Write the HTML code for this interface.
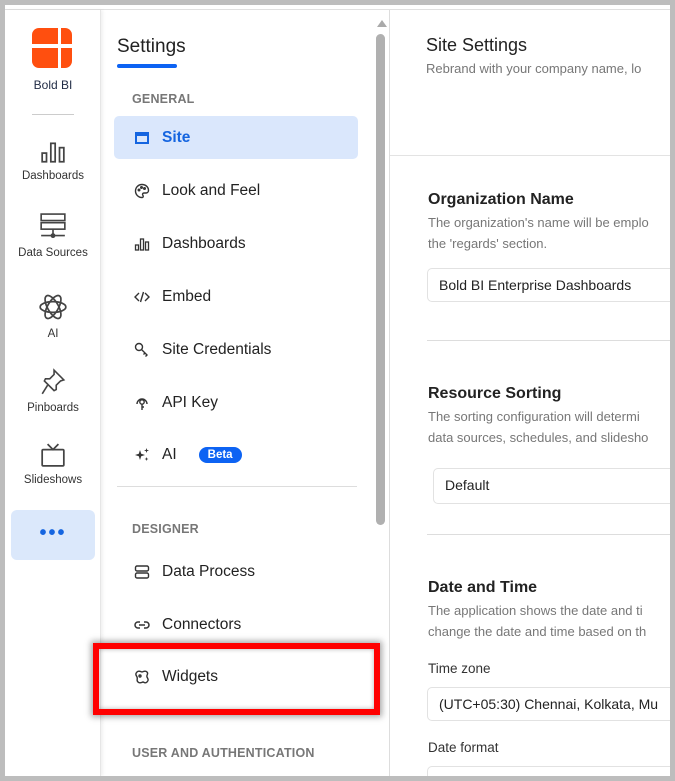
<!DOCTYPE html>
<html><head><meta charset="utf-8"><style>
*{box-sizing:border-box;margin:0;padding:0}
body{width:675px;height:781px;background:#bdbdbd;font-family:"Liberation Sans",Arial,sans-serif;position:relative;overflow:hidden}
#win{position:absolute;left:5px;top:5px;width:665px;height:771px;background:#fff;overflow:hidden}
#topline{position:absolute;left:0;top:4px;width:665px;height:1px;background:#e0e0e0}
#nav{position:absolute;left:0;top:5px;width:96px;height:766px;background:#fff;border-right:1px solid #e6e6e6;box-shadow:2px 0 3px rgba(0,0,0,.06)}
.ni{position:absolute;left:0;width:96px;text-align:center;font-size:11.5px;color:#333}
.ni svg{display:block;margin:0 auto 6px}
#set{position:absolute;left:97px;top:5px;width:286px;height:766px}
.it{position:absolute;left:12px;width:244px;height:43px;display:flex;align-items:center;padding-left:20px;font-size:15.5px;color:#222}
.it svg{width:16px;height:16px;margin-right:12px;flex:none}
.sec{position:absolute;left:30px;font-size:12.5px;font-weight:bold;color:#777;letter-spacing:.2px}
#main{position:absolute;left:384px;top:5px;width:281px;height:766px;border-left:1px solid #ddd}
.h{position:absolute;left:38px;font-size:16px;font-weight:bold;color:#222}
.d{position:absolute;left:38px;font-size:13px;color:#777;line-height:21px;white-space:nowrap}
.inp{position:absolute;left:37px;width:260px;height:34px;border:1px solid #e2e2e2;border-radius:5px;font-size:14px;color:#222;padding:8px 0 0 11px;white-space:nowrap}
.hr{position:absolute;left:37px;width:260px;height:1px;background:#ddd}
</style></head><body>
<div id="win">
<div id="topline"></div>
<div id="nav">
 <svg style="position:absolute;left:27px;top:18px" width="40" height="40" viewBox="0 0 40 40"><path d="M0 7a7 7 0 0 1 7-7h19v16H0z" fill="#ff4f0f"/><path d="M29 0h4a7 7 0 0 1 7 7v9H29z" fill="#ff4f0f"/><path d="M0 20h26v20H7a7 7 0 0 1-7-7z" fill="#ff4f0f"/><path d="M29 20h11v13a7 7 0 0 1-7 7h-4z" fill="#ff4f0f"/></svg>
 <div class="ni" style="top:68px;font-size:12px;color:#1f2a44">Bold BI</div>
 <div style="position:absolute;left:27px;top:104px;width:42px;height:1px;background:#ccc"></div>
 <div class="ni" style="top:130px"><svg width="26" height="24" viewBox="0 0 24 22" fill="none" stroke="#444" stroke-width="1.6"><rect x="2" y="12" width="4" height="8"/><rect x="10" y="3" width="4" height="17"/><rect x="18" y="7" width="4" height="13"/></svg>Dashboards</div>
 <div class="ni" style="top:203px"><svg width="28" height="28" viewBox="0 0 26 26" fill="none" stroke="#444" stroke-width="1.5"><rect x="2" y="1" width="22" height="6"/><rect x="2" y="9" width="22" height="6"/><path d="M13 15v5M2 21h22"/><circle cx="13" cy="21" r="1.5" fill="#444"/></svg>Data Sources</div>
 <div class="ni" style="top:282px"><svg width="30" height="30" viewBox="0 0 28 28" fill="none" stroke="#444" stroke-width="1.6"><ellipse cx="14" cy="14" rx="12" ry="5"/><ellipse cx="14" cy="14" rx="12" ry="5" transform="rotate(60 14 14)"/><ellipse cx="14" cy="14" rx="12" ry="5" transform="rotate(-60 14 14)"/></svg>AI</div>
 <div class="ni" style="top:358px"><svg width="26" height="28" viewBox="0 0 24 26" fill="none" stroke="#444" stroke-width="1.5"><path d="M13 2l9 9-3 1-4 4 0 4-2 1-9-9 1-2 4 0 4-4z"/><path d="M7 16l-5 8"/></svg>Pinboards</div>
 <div class="ni" style="top:432px"><svg width="26" height="26" viewBox="0 0 24 24" fill="none" stroke="#444" stroke-width="1.6"><rect x="2" y="7" width="20" height="15" rx="1"/><path d="M7 2l5 5 5-5"/></svg>Slideshows</div>
 <div style="position:absolute;left:6px;top:500px;width:84px;height:50px;background:#dbe8fb;border-radius:6px;text-align:center;line-height:46px;color:#1565e0;font-size:20px;letter-spacing:2px;font-weight:bold">•••</div>
</div>
<div id="set">
 <div style="position:absolute;left:15px;top:26px;font-size:19px;color:#222">Settings</div>
 <div style="position:absolute;left:15px;top:54px;width:60px;height:4px;border-radius:2px;background:#0d63f3"></div>
 <div class="sec" style="top:82px">GENERAL</div>
 <div class="it" style="top:106px;background:#dae7fc;border-radius:5px;color:#1565e0;font-weight:bold"><svg viewBox="0 0 16 16"><rect x="1" y="2" width="14" height="12" fill="#1565e0"/><rect x="3" y="6" width="10" height="6" fill="#dae7fc"/></svg>Site</div>
 <div class="it" style="top:159px"><svg viewBox="0 0 16 16" fill="none" stroke="#333" stroke-width="1.4"><path d="M8 1.5a6.5 6.5 0 1 0 0 13c1.5 0 1.5-1.5.8-2.3-.7-.9 0-2.2 1.2-2.2H12a2.5 2.5 0 0 0 2.5-2.5C14.5 4 11.6 1.5 8 1.5z"/><circle cx="5" cy="7" r=".8"/><circle cx="7.5" cy="4.5" r=".8"/><circle cx="10.5" cy="5.5" r=".8"/></svg>Look and Feel</div>
 <div class="it" style="top:212px"><svg viewBox="0 0 16 16" fill="none" stroke="#333" stroke-width="1.3"><rect x="1.5" y="9" width="3" height="5"/><rect x="6.5" y="3" width="3" height="11"/><rect x="11.5" y="6" width="3" height="8"/></svg>Dashboards</div>
 <div class="it" style="top:265px"><svg viewBox="0 0 16 16" fill="none" stroke="#333" stroke-width="1.4"><path d="M5 4L1 8l4 4M11 4l4 4-4 4M9.5 3l-3 10"/></svg>Embed</div>
 <div class="it" style="top:318px"><svg viewBox="0 0 16 16" fill="none" stroke="#333" stroke-width="1.4"><circle cx="5" cy="5" r="3.5"/><path d="M7.5 7.5l6 6M11 11l-1.5 1.5M13 13l-1.5 1.5"/></svg>Site Credentials</div>
 <div class="it" style="top:371px"><svg viewBox="0 0 16 16" fill="none" stroke="#333" stroke-width="1.4"><path d="M3 9a5 5 0 1 1 10 0"/><circle cx="8" cy="7" r="2.2"/><path d="M8 9.2V15M8 12h2"/></svg>API Key</div>
 <div class="it" style="top:423px"><svg viewBox="0 0 16 16" fill="#333"><path d="M6 3l1.2 3.8L11 8 7.2 9.2 6 13 4.8 9.2 1 8l3.8-1.2z"/><path d="M12.5 1l.6 1.9 1.9.6-1.9.6-.6 1.9-.6-1.9-1.9-.6 1.9-.6z"/><path d="M12.5 10l.5 1.5 1.5.5-1.5.5-.5 1.5-.5-1.5-1.5-.5 1.5-.5z"/></svg>AI<span style="margin-left:22px;background:#0d63f3;color:#fff;font-size:11.5px;font-weight:bold;padding:2px 9px;border-radius:8px">Beta</span></div>
 <div style="position:absolute;left:15px;top:476px;width:240px;height:1px;background:#ddd"></div>
 <div class="sec" style="top:512px">DESIGNER</div>
 <div class="it" style="top:540px"><svg viewBox="0 0 16 16" fill="none" stroke="#333" stroke-width="1.4"><rect x="1.5" y="2" width="13" height="5" rx="1.5"/><rect x="1.5" y="9" width="13" height="5" rx="1.5"/></svg>Data Process</div>
 <div class="it" style="top:593px"><svg viewBox="0 0 16 16" fill="none" stroke="#333" stroke-width="1.5"><path d="M6 5H4a3 3 0 0 0 0 6h2M10 5h2a3 3 0 0 1 0 6h-2M5 8h6"/></svg>Connectors</div>
 <div class="it" style="top:645px"><svg viewBox="0 0 16 16" fill="none" stroke="#333" stroke-width="1.4"><path d="M3 3c2-2 4 0 5 0s3-2 5 0-1 3 0 5 2 3 0 5-3 0-4 0-3 2-5 0 0-3-1-5-2-3 0-5z"/><circle cx="6" cy="7" r="1"/></svg>Widgets</div>
 <div class="sec" style="top:736px">USER AND AUTHENTICATION</div>
 <div style="position:absolute;left:-9px;top:633px;width:287px;height:72px;border:6px solid #f00;box-shadow:0 0 6px 2px rgba(0,0,0,.35),inset 0 0 5px rgba(0,0,0,.3)"></div>
 <div style="position:absolute;left:275px;top:10px;width:0;height:0;border-left:5px solid transparent;border-right:5px solid transparent;border-bottom:7px solid #aaa"></div>
 <div style="position:absolute;left:274px;top:24px;width:9px;height:491px;border-radius:5px;background:#b0b0b0"></div>
</div>
<div id="main">
 <div style="position:absolute;left:36px;top:25px;font-size:18px;color:#222">Site Settings</div>
 <div class="d" style="left:36px;top:48px">Rebrand with your company name, lo</div>
 <div style="position:absolute;left:0;top:145px;width:281px;height:1px;background:#e3e3e3"></div>
 <div class="h" style="top:181px">Organization Name</div>
 <div class="d" style="top:202px">The organization's name will be emplo<br>the 'regards' section.</div>
 <div class="inp" style="top:258px">Bold BI Enterprise Dashboards</div>
 <div class="hr" style="top:330px"></div>
 <div class="h" style="top:375px">Resource Sorting</div>
 <div class="d" style="top:396px">The sorting configuration will determi<br>data sources, schedules, and slidesho</div>
 <div class="inp" style="top:458px;left:43px;height:36px">Default</div>
 <div class="hr" style="top:524px"></div>
 <div class="h" style="top:569px">Date and Time</div>
 <div class="d" style="top:590px">The application shows the date and ti<br>change the date and time based on th</div>
 <div class="d" style="top:648px;color:#333;font-size:13.5px">Time zone</div>
 <div class="inp" style="top:677px">(UTC+05:30) Chennai, Kolkata, Mu</div>
 <div class="d" style="top:727px;color:#333;font-size:13.5px">Date format</div>
 <div class="inp" style="top:756px"></div>
</div>
</div>
</body></html>
